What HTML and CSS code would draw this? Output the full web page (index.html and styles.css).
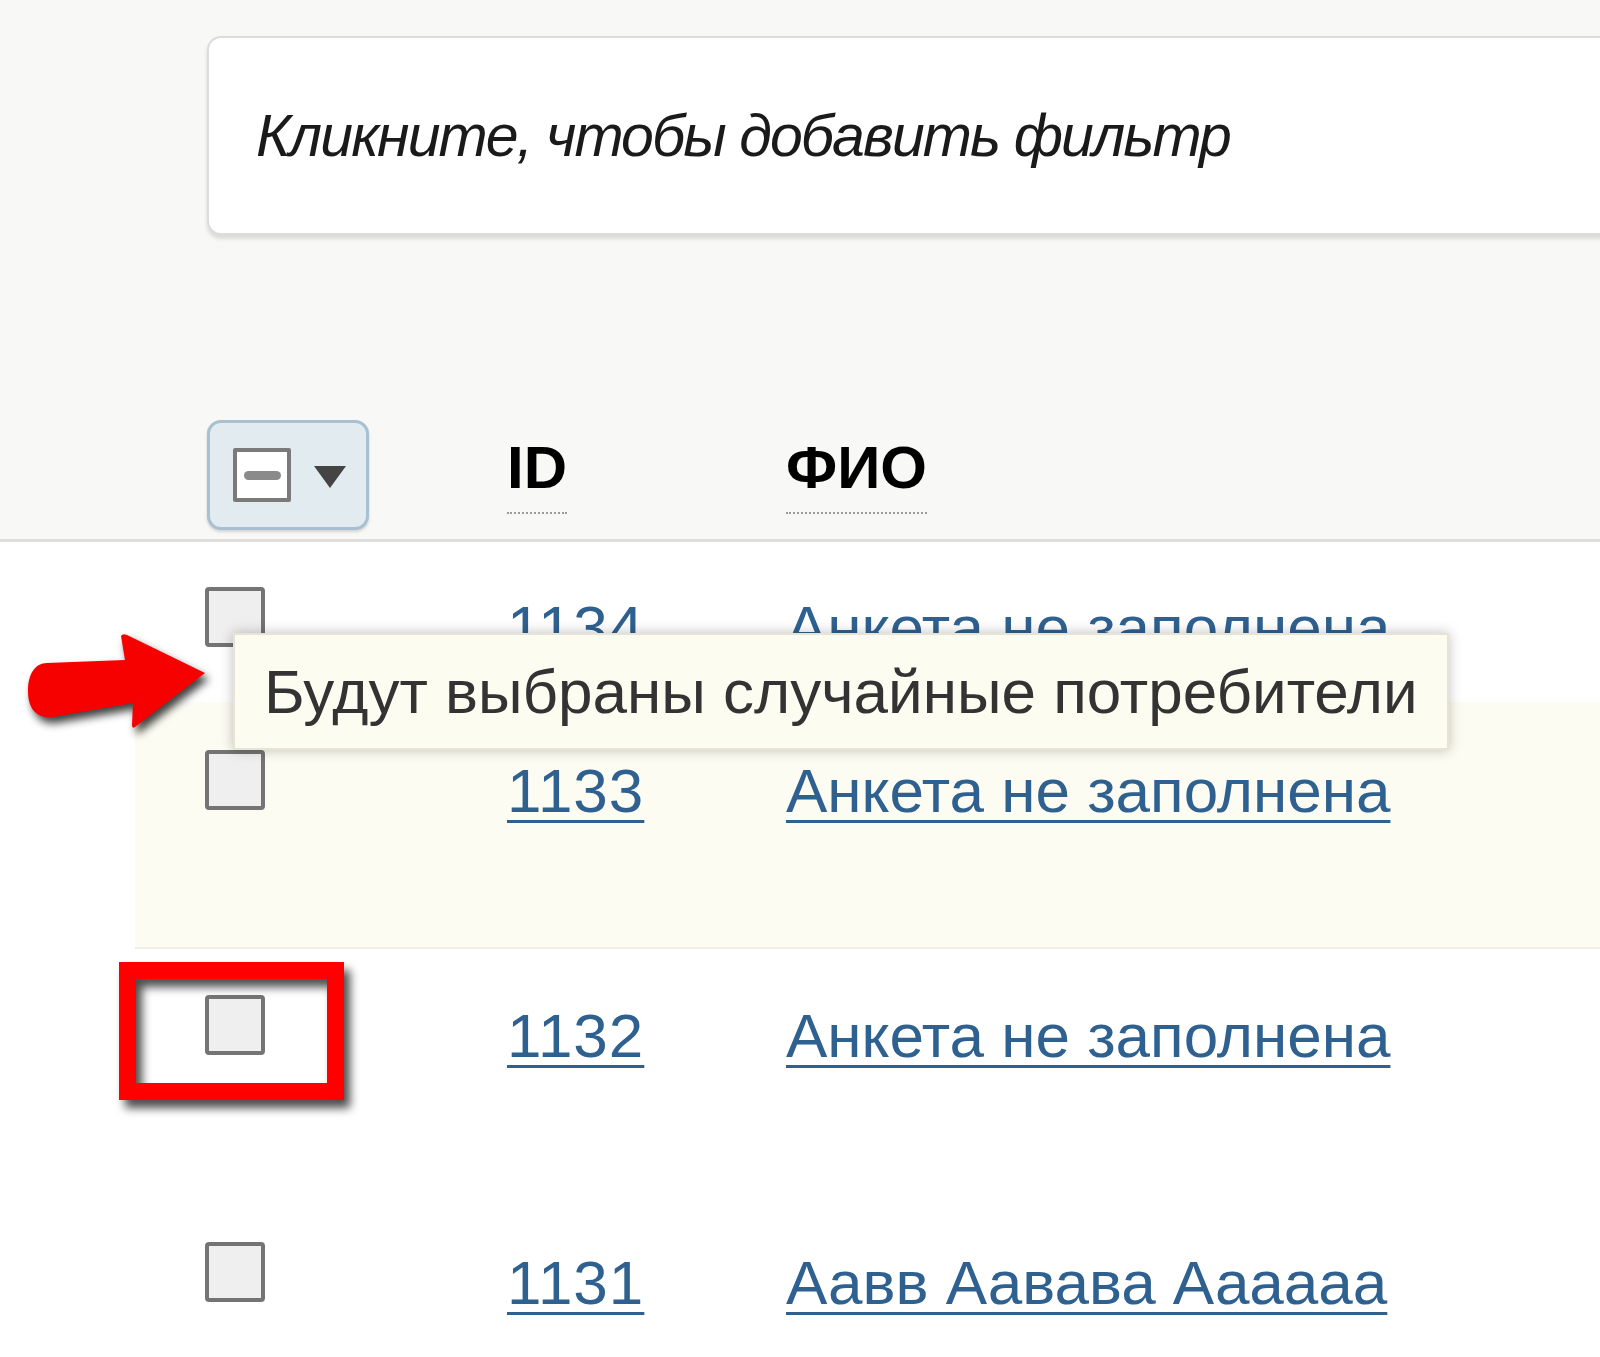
FILE: index.html
```html
<!DOCTYPE html>
<html lang="ru">
<head>
  <meta charset="UTF-8">
  <title>Потребители</title>
  <link rel="stylesheet" href="styles.css">
</head>
<body>
  <div class="page">
    <div class="top">
      <div class="filter"><span>Кликните, чтобы добавить фильтр</span></div>
      <div class="head">
        <div class="cell">
          <button class="bulk"><span class="mini-box"><span class="dash"></span></span><span class="caret"></span></button>
        </div>
        <div class="cell"><span class="sort">ID</span></div>
        <div class="cell"><span class="sort">ФИО</span></div>
      </div>
    </div>

    <div class="rows">
      <div class="row first">
        <div class="cell"><span class="box"></span></div>
        <div class="cell id"><a href="#">1134</a></div>
        <div class="cell"><a href="#">Анкета не заполнена</a></div>
      </div>
      <div class="row hl">
        <div class="cell"><span class="box"></span></div>
        <div class="cell id"><a href="#">1133</a></div>
        <div class="cell"><a href="#">Анкета не заполнена</a></div>
      </div>
      <div class="row">
        <div class="cell"><span class="box"></span></div>
        <div class="cell id"><a href="#">1132</a></div>
        <div class="cell"><a href="#">Анкета не заполнена</a></div>
      </div>
      <div class="row">
        <div class="cell"><span class="box"></span></div>
        <div class="cell id"><a href="#">1131</a></div>
        <div class="cell"><a href="#">Аавв Аавава Аааааа</a></div>
      </div>
    </div>

    <!-- tooltip over the first rows -->
    <div class="tip">Будут выбраны случайные потребители</div>

    <!-- annotations -->
    <svg class="arrow" width="185" height="100" viewBox="0 0 185 100">
      <path d="M22 33 L100 30 L96 6 Q98 3 102 5 L180 43 L110 97 Q107 99 107 95 L108 73 L28 87 C10 89 3 77 3 61 C3 44 10 33 22 33 Z" fill="#f60000"/>
    </svg>
    <div class="mark"></div>
  </div>
</body>
</html>
```

FILE: styles.css
```css
body {
  margin: 0;
  background: #fff;
  font-family: "Liberation Sans", Arial, sans-serif;
  color: #222;
  overflow: hidden;
}
.page {
  position: relative;
  width: 1600px;
  height: 1357px;
  overflow: hidden;
}
.top {
  box-sizing: border-box;
  height: 542px;
  padding: 36px 0 0 207px;
  background: #f8f8f6;
  border-bottom: 3px solid #dedede;
}
.filter {
  box-sizing: border-box;
  height: 199px;
  margin-right: -40px;
  padding-left: 47px;
  display: flex;
  align-items: center;
  background: #fff;
  border: 2px solid #dcdcdc;
  border-radius: 14px;
  box-shadow: 0 4px 4px rgba(0, 0, 0, 0.12);
}
.filter span {
  font-style: italic;
  font-size: 59px;
  color: #1a1a1a;
  letter-spacing: -1.9px;
}
.head {
  display: grid;
  grid-template-columns: 300px 279px 1fr;
  margin-top: 185px;
  align-items: start;
}
.bulk {
  box-sizing: border-box;
  width: 162px;
  height: 110px;
  padding: 0 0 0 23px;
  display: flex;
  align-items: center;
  gap: 23px;
  background: #e2ebf0;
  border: 3px solid #a9c0d1;
  border-radius: 14px;
  box-shadow: 0 2px 3px rgba(0, 0, 0, 0.15);
  cursor: pointer;
}
.mini-box {
  box-sizing: border-box;
  width: 58px;
  height: 54px;
  display: flex;
  align-items: center;
  justify-content: center;
  background: #fff;
  border: 4px solid #7a7a7a;
  border-radius: 2px;
}
.dash {
  width: 37px;
  height: 9px;
  border-radius: 5px;
  background: #8a8a8a;
}
.caret {
  width: 0;
  height: 0;
  border-left: 16px solid transparent;
  border-right: 16px solid transparent;
  border-top: 22px solid #444;
  margin-top: 4px;
}
.sort {
  display: inline-block;
  margin-top: 18px;
  padding-bottom: 14px;
  font-size: 60px;
  font-weight: bold;
  line-height: 1;
  color: #000;
  border-bottom: 2px dotted #9a9a9a;
}
.row {
  box-sizing: border-box;
  height: 247px;
  margin-left: 135px;
  padding: 46px 0 0 70px;
  display: grid;
  grid-template-columns: 302px 279px 1fr;
  align-items: start;
}
.row.first {
  height: 160px;
  padding-top: 45px;
}
.row.hl {
  background: #fdfcf2;
  border-bottom: 2px solid #f0efe4;
  padding-top: 48px;
}
.box {
  display: block;
  box-sizing: border-box;
  width: 60px;
  height: 60px;
  background: #efefef;
  border: 4px solid #747474;
  border-radius: 4px;
}
.row a {
  display: inline-block;
  margin-top: 10px;
  font-size: 62px;
  line-height: 1;
  color: #2f6190;
  text-decoration: underline;
  text-decoration-thickness: 3px;
  text-underline-offset: 8px;
}
.row .id a {
  letter-spacing: 1px;
}
.tip {
  position: absolute;
  left: 233px;
  top: 633px;
  box-sizing: border-box;
  width: 1216px;
  height: 117px;
  padding-left: 29px;
  display: flex;
  align-items: center;
  background: #fdfcf1;
  border: 2px solid #e6e4d6;
  box-shadow: 0 0 12px rgba(0, 0, 0, 0.25);
  font-size: 62px;
  color: #333;
  white-space: nowrap;
}
.arrow {
  position: absolute;
  left: 25px;
  top: 630px;
  filter: drop-shadow(4px 6px 4px rgba(0, 0, 0, 0.75));
}
.mark {
  position: absolute;
  left: 119px;
  top: 962px;
  box-sizing: border-box;
  width: 225px;
  height: 138px;
  border: 17px solid #ff0000;
  filter: drop-shadow(6px 8px 5px rgba(0, 0, 0, 0.7));
}
```
